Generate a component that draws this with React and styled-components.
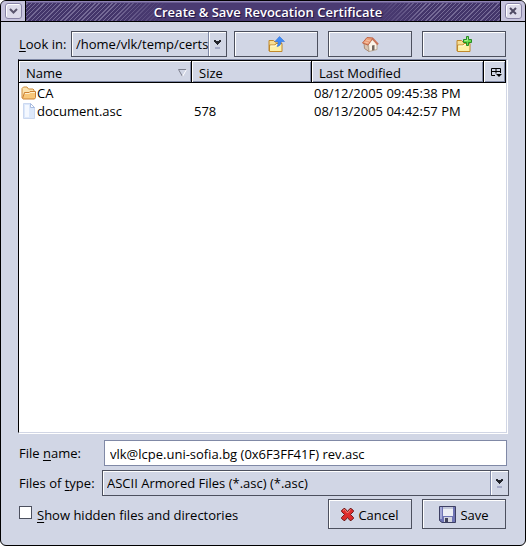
import React, { useState } from "react";
import styled, { createGlobalStyle, css } from "styled-components";

const PALETTE = {
  face: "#d1d6e5",
  border: "#4c505e",
  shadow: "#8089a6",
  light: "#ffffff",
  text: "#000000",
  title: "#4a3b72",
};

const bevel = css`
  box-shadow: inset 1px 1px 0 ${PALETTE.light};
`;

const GlobalStyle = createGlobalStyle`
  *, *::before, *::after {
    box-sizing: border-box;
  }

  html, body {
    margin: 0;
    background: #ffffff;
  }

  body, button, input, select {
    font-family: "Open Sans", "Noto Sans", sans-serif;
    font-size: 13px;
    line-height: 18px;
    color: ${PALETTE.text};
  }
`;

const Window = styled.div`
  min-height: 100vh;
  display: flex;
  flex-direction: column;
  overflow: hidden;
  background-color: ${PALETTE.face};
  border: 1px solid #000;
  border-radius: 6px;
`;

const TitleBar = styled.header`
  height: 21px;
  display: flex;
  border-bottom: 1px solid #000;
  background: ${PALETTE.title};
`;

const TitleText = styled.h1`
  flex: 1;
  margin: 0;
  padding-left: 10px;
  font-size: 13px;
  font-weight: 600;
  line-height: 22px;
  text-align: center;
  white-space: nowrap;
  color: #fff;
  text-shadow: 1px 1px 1px #1c1040;
  background-image: linear-gradient(
      90deg,
      transparent 18%,
      ${PALETTE.title} 30%,
      ${PALETTE.title} 74%,
      transparent 84%
    ),
    repeating-linear-gradient(
      135deg,
      #43356a 0,
      #43356a 2px,
      #756a96 2px,
      #756a96 3px
    );
  box-shadow: inset 0 1px 0 #8f83b4, inset 0 2px 0 #6a5d92;
`;

const TitleButtonSlot = styled.div`
  width: 25px;
  display: flex;
  align-items: center;
  justify-content: center;
  background: #c6c3dc;
  border: solid #000;
  border-width: ${({ $side }) => ($side === "left" ? "0 1px 0 0" : "0 0 0 1px")};
`;

const TitleButton = styled.button`
  width: 17px;
  height: 16px;
  padding: 0;
  display: flex;
  align-items: center;
  justify-content: center;
  background: #dddbea;
  border: 1px solid #8883a6;
  border-radius: 3px;
  ${bevel};
`;

const Content = styled.form`
  flex: 1;
  display: flex;
  flex-direction: column;
  padding: 9px 18px 16px 17px;
`;

const Toolbar = styled.div`
  display: flex;
  align-items: center;
  gap: 10px;
  margin-right: 1px;
`;

const LookIn = styled.div`
  flex: 1;
  display: flex;
  align-items: center;
  margin-right: -3px;
  padding-left: 1px;
`;

const LookInLabel = styled.label`
  flex: none;
  width: 52px;
  white-space: nowrap;
`;

const Underline = styled.span`
  text-decoration: underline;
  text-underline-offset: 2px;
`;

const SelectWrapper = styled.div`
  flex: 1;
  min-width: 0;
  display: grid;
  align-items: stretch;

  > * {
    grid-area: 1 / 1;
  }
`;

const Select = styled.select`
  width: 100%;
  height: 26px;
  padding: 0 16px 0 4px;
  appearance: none;
  background-color: ${PALETTE.face};
  border: 1px solid ${PALETTE.border};
  border-radius: 0;
  ${bevel};
`;

const SelectArrow = styled.span`
  justify-self: end;
  width: 18px;
  margin: 1px 1px 1px 0;
  display: flex;
  align-items: center;
  justify-content: center;
  pointer-events: none;
  border-left: 1px solid ${PALETTE.shadow};
  ${bevel};
`;

const Button = styled.button`
  flex: none;
  width: 84px;
  height: ${({ $tall }) => ($tall ? "30px" : "26px")};
  padding: 1px 0 0;
  display: flex;
  align-items: center;
  justify-content: center;
  gap: 4px;
  background-color: ${PALETTE.face};
  border: 1px solid ${PALETTE.border};
  ${bevel};
`;

const FilePanel = styled.div`
  flex: 1;
  margin-top: 2px;
  background-color: #fff;
  border: 1px solid #000;
  border-color: ${PALETTE.shadow} ${PALETTE.face} ${PALETTE.face} #000;
  box-shadow: 1px 1px 0 #fff;
`;

const FileTable = styled.table`
  width: 100%;
  table-layout: fixed;
  border-collapse: separate;
  border-spacing: 0;
`;

const HeadCell = styled.th`
  width: ${({ $width }) => $width};
  height: 23px;
  padding: 2px 0 0 7px;
  font-weight: 400;
  text-align: left;
  background-color: ${PALETTE.face};
  border: solid #000;
  border-width: 1px 1px 1px 0;
  box-shadow: inset 1px 1px 0 #fff, inset -1px -1px 0 ${PALETTE.shadow};
`;

const HeadLabel = styled.div`
  display: flex;
  align-items: center;
  justify-content: space-between;
  padding-right: 4px;
`;

const PickerButton = styled.button`
  display: block;
  padding: 0;
  line-height: 0;
  background: none;
  border: 0;
`;

const Cell = styled.td`
  height: 18px;
  padding: 2px 0 0 2px;
  line-height: 16px;
  white-space: nowrap;
`;

const FileName = styled.div`
  display: flex;
  align-items: center;
  height: 16px;
`;

const Field = styled.div`
  display: flex;
  align-items: center;
  margin-top: ${({ $gap }) => $gap};
  margin-right: ${({ $outdent }) => ($outdent ? "-2px" : 0)};
`;

const FieldLabel = styled.label`
  flex: none;
  width: ${({ $width }) => $width};
  padding-left: 1px;
  white-space: nowrap;
`;

const TextInput = styled.input`
  flex: 1;
  min-width: 0;
  height: 26px;
  padding: 1px 5px 0;
  background-color: #fff;
  border: 1px solid ${PALETTE.shadow};
  border-radius: 0;
`;

const Footer = styled.div`
  display: flex;
  gap: 10px;
  margin: 3px 1px 0 0;
`;

const HiddenToggle = styled.label`
  flex: 1;
  display: flex;
  align-items: center;
  gap: 5px;
  padding: 2px 0 0 1px;
  white-space: nowrap;
`;

const Checkbox = styled.input`
  appearance: none;
  width: 13px;
  height: 13px;
  margin: 0 0 5px;
  background-color: #fff;
  border: 1px solid ${PALETTE.border};

  &:checked {
    background-color: ${PALETTE.title};
  }
`;

const DropIcon = () => (
  <svg width="7" height="9" viewBox="0 0 7 9" aria-hidden="true">
    <path d="M0 0h2v1h3V0h2v2H6v1H5v1H4v1H3V4H2V3H1V2H0z" fill="#23252c" />
    <path d="M1 7h5v2H1z" fill="#a5abc8" />
  </svg>
);

const MenuIcon = () => (
  <svg width="9" height="7" viewBox="0 0 9 7" aria-hidden="true">
    <path d="M1 1l3.500 3.500L8 1" fill="none" stroke="#5b566e" strokeWidth="2" />
  </svg>
);

const CloseIcon = () => (
  <svg width="8" height="8" viewBox="0 0 8 8" aria-hidden="true">
    <path d="M1 1l6 6M7 1L1 7" stroke="#4f4a63" strokeWidth="2" />
  </svg>
);

const SortIcon = () => (
  <svg width="9" height="8" viewBox="0 0 9 8" aria-hidden="true">
    <path d="M8.500.5h-8l4 7" fill="none" stroke="#7c7f8c" />
    <path d="M8.500.5L4.500 7.500" stroke="#fff" />
  </svg>
);

const ColumnsIcon = () => (
  <svg width="11" height="10" viewBox="0 0 11 10" aria-hidden="true">
    <path
      d="M4 7.500H.5v-7h9V5M.5 3.500h9M5 .5v5"
      fill="none"
      stroke="#000"
    />
    <path d="M5 6h6L8 9z" />
  </svg>
);

const FolderIcon = () => (
  <svg width="16" height="14" viewBox="0 0 16 14" aria-hidden="true">
    <path
      d="M1 12V2.500L2.500 1H6l1.500 2H12l1 1v3"
      fill="#fbe3b0"
      stroke="#cf8d3c"
    />
    <path
      d="M1.500 12.500L3.500 6.500H8l1-1h5.500v6l-1 1.500H2z"
      fill="#f8c77a"
      stroke="#cb8033"
    />
    <path d="M4 7.500h4.500l1-1H14" fill="none" stroke="#fff0cf" />
  </svg>
);

const DocumentIcon = () => (
  <svg width="16" height="16" viewBox="0 0 16 16" aria-hidden="true">
    <path d="M2.500.5h7l4 4v11h-11z" fill="#dce8fb" stroke="#cbd8f0" />
    <path d="M4 2h4v12H4z" fill="#f4f8ff" />
    <path d="M9.500.5v4h4z" fill="#fff" stroke="#a9bce0" />
  </svg>
);

const OpenFolder = () => (
  <>
    <path d="M1 15V4.500h4.500L7 6h6v2" fill="#f7df94" stroke="#c0882b" />
    <path d="M1.500 15.500V9H7l1-1.500h6v8z" fill="#fdf0a6" stroke="#c0882b" />
    <path d="M2.500 10h5l1-1.500H13" fill="none" stroke="#fffbe0" />
  </>
);

const FolderUpIcon = () => (
  <svg width="17" height="17" viewBox="0 0 17 17" aria-hidden="true">
    <OpenFolder />
    <path
      d="M11.500.5l5 5H13c0 3-1 4.500-4 5 1-1.500 1.200-3 1-5H7z"
      fill="#3f8cf5"
      stroke="#2c6fe0"
      strokeWidth=".6"
    />
  </svg>
);

const NewFolderIcon = () => (
  <svg width="17" height="17" viewBox="0 0 17 17" aria-hidden="true">
    <OpenFolder />
    <path
      d="M10.500.5h2v3h3v3h-3v3h-2v-3h-3v-3h3z"
      fill="#66d94c"
      stroke="#278d22"
    />
    <path d="M11.500 1.500v3H8.500" fill="none" stroke="#a6f18c" />
  </svg>
);

const HomeIcon = () => (
  <svg width="17" height="17" viewBox="0 0 17 17" aria-hidden="true">
    <path d="M2 7l4 1.500 1 7L2.500 12.500z" fill="#d9c5b2" stroke="#a98c78" />
    <path d="M6.500 8L11 3l4 5v5.500l-8 2z" fill="#fbf4e8" stroke="#b9a795" />
    <path d="M.5 7L5 1.500l6 .5-5 7z" fill="#eca07a" stroke="#bf6647" />
    <path
      d="M10.500 2.500l5.500 6"
      fill="none"
      stroke="#c9755a"
      strokeWidth="2"
    />
    <path d="M2.500 6l4 1M4 4l4.500 1" stroke="#f7c2a3" />
    <path d="M10 9.500l2.500-.5v5l-2.500.5z" fill="#75685f" />
  </svg>
);

const CancelIcon = () => (
  <svg width="13" height="13" viewBox="0 0 13 13" aria-hidden="true">
    <path
      d="M3 .5h1l2.500 3 2.500-3h1l2.500 2v1l-3 3 3 3v1l-2.500 2H9l-2.500-3-2.500 3H3l-2.500-2v-1l3-3-3-3v-1z"
      fill="#dd2c2c"
      stroke="#701c1c"
    />
    <path d="M2 2.500l1.500-1 3 3.500L9.500 1.500" fill="none" stroke="#f58a80" />
  </svg>
);

const SaveIcon = () => (
  <svg width="17" height="17" viewBox="0 0 17 17" aria-hidden="true">
    <path d="M.5.5h16v16H3l-2.500-2z" fill="#6f74b4" stroke="#3d3f63" />
    <path d="M1 1h2v12H1z" fill="#a7abd8" />
    <path d="M4 1h10v9H4z" fill="#eceef5" />
    <path d="M4 1h10v2H4z" fill="#c3c8da" />
    <path d="M5 11h8v5H5z" fill="#d5d7e0" />
    <path d="M6 12h3v4H6z" fill="#43455e" />
  </svg>
);

const FILES = [
  { name: "CA", size: "", modified: "08/12/2005 09:45:38 PM", Icon: FolderIcon },
  {
    name: "document.asc",
    size: "578",
    modified: "08/13/2005 04:42:57 PM",
    Icon: DocumentIcon,
  },
];

const Dropdown = ({ id, options }) => (
  <SelectWrapper>
    <Select id={id}>
      {options.map(option => (
        <option key={option}>{option}</option>
      ))}
    </Select>
    <SelectArrow>
      <DropIcon />
    </SelectArrow>
  </SelectWrapper>
);

const FileList = () => (
  <FilePanel>
    <FileTable>
      <thead>
        <tr>
          <HeadCell $width="173px">
            <HeadLabel>
              Name
              <SortIcon />
            </HeadLabel>
          </HeadCell>
          <HeadCell $width="120px">Size</HeadCell>
          <HeadCell>Last Modified</HeadCell>
          <HeadCell $width="22px">
            <PickerButton type="button" aria-label="Columns">
              <ColumnsIcon />
            </PickerButton>
          </HeadCell>
        </tr>
      </thead>
      <tbody>
        {FILES.map(({ name, size, modified, Icon }) => (
          <tr key={name}>
            <Cell>
              <FileName>
                <Icon />
                {name}
              </FileName>
            </Cell>
            <Cell>{size}</Cell>
            <Cell colSpan={2}>{modified}</Cell>
          </tr>
        ))}
      </tbody>
    </FileTable>
  </FilePanel>
);

const App = () => {
  const [fileName, setFileName] = useState(
    "vlk@lcpe.uni-sofia.bg (0x6F3FF41F) rev.asc"
  );
  const [isHiddenShown, setIsHiddenShown] = useState(false);

  return (
    <>
      <GlobalStyle />
      <Window>
        <TitleBar>
          <TitleButtonSlot $side="left">
            <TitleButton type="button" aria-label="Window menu">
              <MenuIcon />
            </TitleButton>
          </TitleButtonSlot>
          <TitleText>Create &amp; Save Revocation Certificate</TitleText>
          <TitleButtonSlot $side="right">
            <TitleButton type="button" aria-label="Close">
              <CloseIcon />
            </TitleButton>
          </TitleButtonSlot>
        </TitleBar>

        <Content onSubmit={e => e.preventDefault()}>
          <Toolbar>
            <LookIn>
              <LookInLabel htmlFor="look_in">
                <Underline>L</Underline>ook in:
              </LookInLabel>
              <Dropdown id="look_in" options={["/home/vlk/temp/certs"]} />
            </LookIn>
            <Button type="button" aria-label="Up one level">
              <FolderUpIcon />
            </Button>
            <Button type="button" aria-label="Home">
              <HomeIcon />
            </Button>
            <Button type="button" aria-label="New directory">
              <NewFolderIcon />
            </Button>
          </Toolbar>

          <FileList />

          <Field $gap="7px">
            <FieldLabel htmlFor="file_name" $width="86px">
              File <Underline>n</Underline>ame:
            </FieldLabel>
            <TextInput
              id="file_name"
              value={fileName}
              onChange={e => setFileName(e.target.value)}
            />
          </Field>
          <Field $gap="4px" $outdent>
            <FieldLabel htmlFor="file_type" $width="84px">
              Files of <Underline>t</Underline>ype:
            </FieldLabel>
            <Dropdown
              id="file_type"
              options={["ASCII Armored Files (*.asc) (*.asc)"]}
            />
          </Field>

          <Footer>
            <HiddenToggle>
              <Checkbox
                type="checkbox"
                checked={isHiddenShown}
                onChange={e => setIsHiddenShown(e.target.checked)}
              />
              <span>
                <Underline>S</Underline>how hidden files and directories
              </span>
            </HiddenToggle>
            <Button type="button" $tall>
              <CancelIcon />
              Cancel
            </Button>
            <Button type="submit" $tall>
              <SaveIcon />
              Save
            </Button>
          </Footer>
        </Content>
      </Window>
    </>
  );
};

export default App;
